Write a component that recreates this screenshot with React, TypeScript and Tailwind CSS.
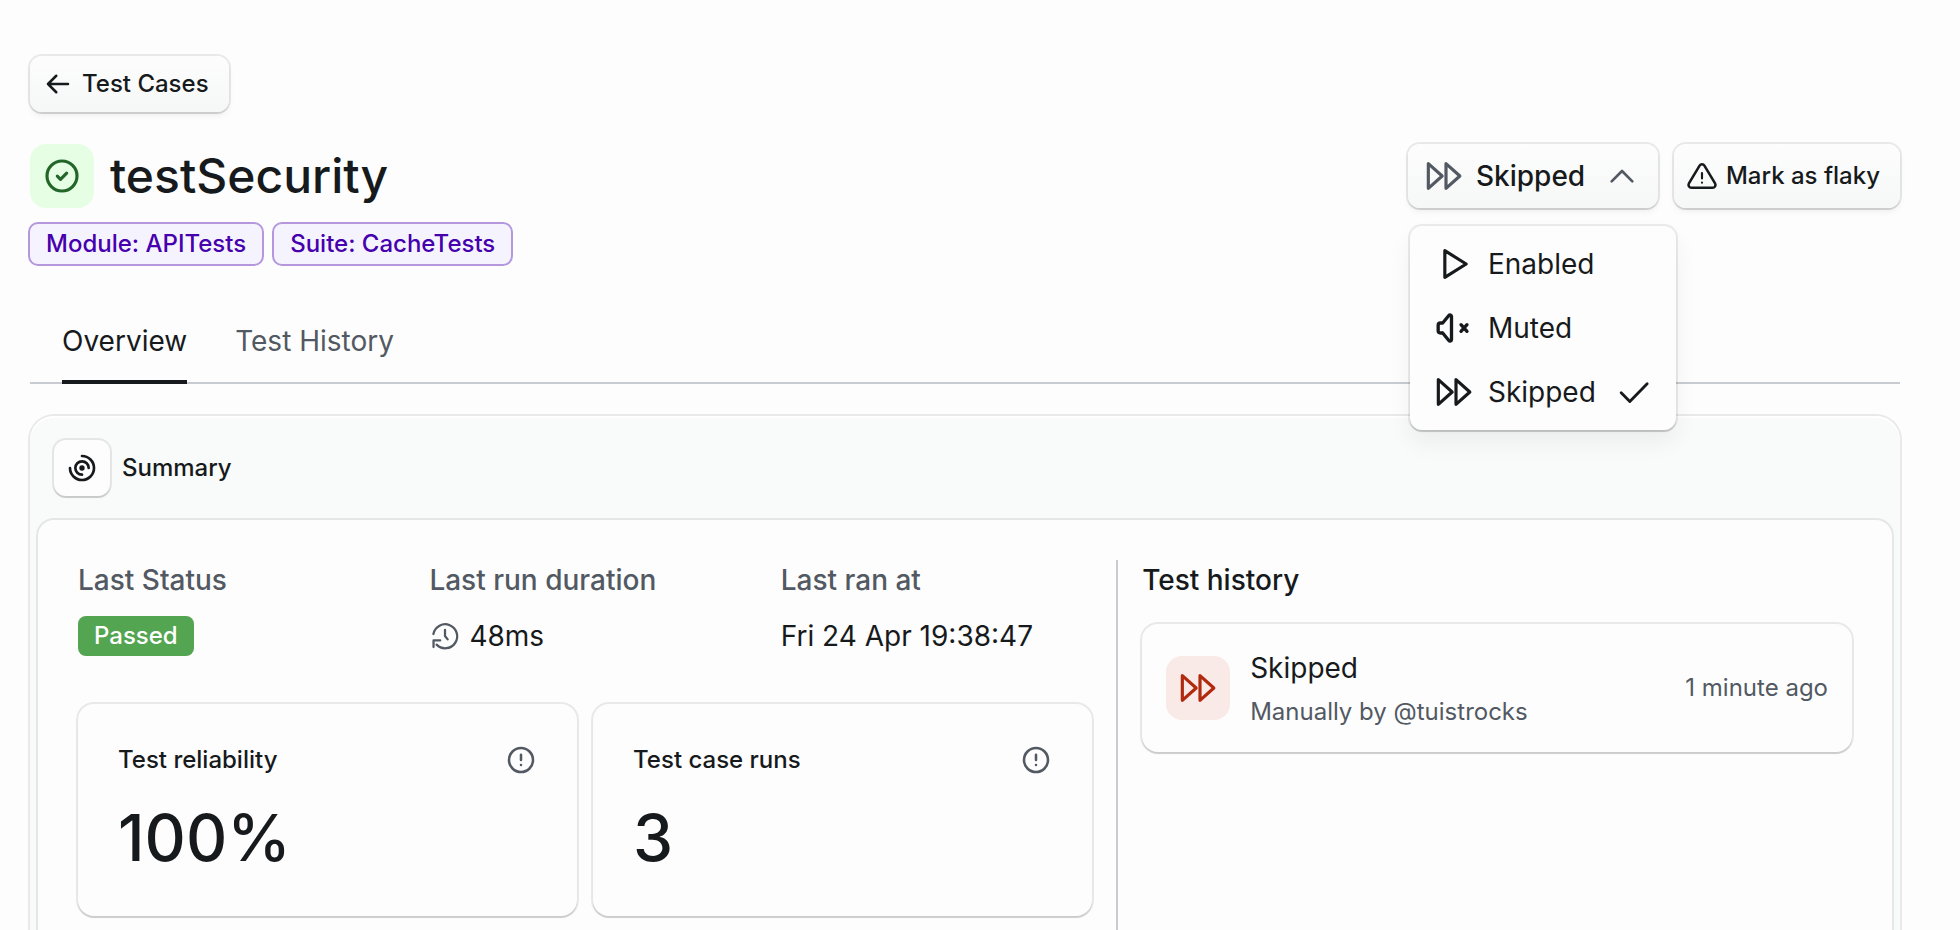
import type { ReactNode } from "react";
import clsx from "clsx";

const RING = "shadow-[0_0_0_2px_rgba(0,0,0,0.08),0_2px_1px_rgba(0,0,0,0.12)]";
const BUTTON =
  "rounded-xl bg-linear-to-b from-[#fdfdfd] to-[#f6f7f7] shadow-[0_0_0_2px_rgba(0,0,0,0.08),0_2px_1px_rgba(0,0,0,0.08),0_4px_6px_rgba(0,0,0,0.05)]";

function Icon({ className, strokeWidth = 1.9, children }: { className?: string; strokeWidth?: number; children: ReactNode }) {
  return (
    <svg
      viewBox="0 0 24 24"
      fill="none"
      stroke="currentColor"
      strokeWidth={strokeWidth}
      strokeLinecap="round"
      strokeLinejoin="round"
      aria-hidden="true"
      className={clsx("shrink-0", className)}
    >
      {children}
    </svg>
  );
}

function SkipIcon({ className }: { className?: string }) {
  return (
    <Icon className={clsx("size-10", className)}>
      <path d="M2.6 4.6v14.8l8.3 -7.4z" />
      <path d="M13.2 4.6v14.8l8.3 -7.4z" />
    </Icon>
  );
}

function ArrowLeftIcon() {
  return (
    <Icon className="size-8">
      <path d="M4.5 12h15M4.5 12l6.2 6.2M4.5 12l6.2 -6.2" />
    </Icon>
  );
}

function InfoIcon() {
  return (
    <Icon className="size-8">
      <circle cx="12" cy="12" r="9" />
      <path d="M12 8v4M12 15.8v.01" />
    </Icon>
  );
}

const MENU_ITEMS = [
  {
    label: "Enabled",
    selected: false,
    icon: (
      <Icon className="size-10">
        <path d="M6.5 4v16l12.8 -8z" />
      </Icon>
    ),
  },
  {
    label: "Muted",
    selected: false,
    icon: (
      <Icon className="size-10" strokeWidth={2}>
        <path d="M5.2 15h-1.4a1.3 1.3 0 0 1 -1.3 -1.3v-3.4a1.3 1.3 0 0 1 1.3 -1.3h1.4l3.7 -4.5a.9 .9 0 0 1 1.6 .6v13.8a.9 .9 0 0 1 -1.6 .6l-3.7 -4.5" />
        <path d="M16.2 10l3.6 4M19.8 10l-3.6 4" />
      </Icon>
    ),
  },
  { label: "Skipped", selected: true, icon: <SkipIcon /> },
];

function StateMenu() {
  return (
    <div className="relative">
      <button aria-haspopup="menu" aria-expanded="true" className={clsx("flex h-16 w-[250px] items-center px-4", BUTTON)}>
        <SkipIcon className="text-[#525962]" />
        <span className="ml-3 text-[28px] font-medium">Skipped</span>
        <Icon className="ml-auto size-10 text-[#525962]" strokeWidth={1.6}>
          <path d="M5.8 15.2l6.2 -6.2l6.2 6.2" />
        </Icon>
      </button>
      <div
        role="menu"
        className="absolute top-full left-0.5 z-10 mt-[18px] w-[266px] rounded-xl bg-[#fdfdfd] py-1.5 shadow-[0_0_0_2px_rgba(0,0,0,0.07),0_2px_1px_rgba(0,0,0,0.14),0_12px_24px_rgba(0,0,0,0.06)]"
      >
        {MENU_ITEMS.map((item) => (
          <button
            key={item.label}
            role="menuitemradio"
            aria-checked={item.selected}
            className="flex h-16 w-full items-center gap-3.5 px-6 text-[28px]"
          >
            {item.icon}
            <span>{item.label}</span>
            {item.selected && (
              <Icon className="ml-auto size-10" strokeWidth={1.7}>
                <path d="M5.5 12.5l5.2 5.2l10.4 -10.7" />
              </Icon>
            )}
          </button>
        ))}
      </div>
    </div>
  );
}

function Tag({ children }: { children: ReactNode }) {
  return (
    <span className="flex h-11 items-center rounded-[10px] border-2 border-[#b497dc] bg-[#f5f4fe] px-4 text-2xl font-medium text-[#4600ad]">
      {children}
    </span>
  );
}

function Field({ label, children }: { label: string; children: ReactNode }) {
  return (
    <div className="flex flex-1 flex-col gap-4">
      <dt className="text-[28px] leading-10 font-medium text-[#525962]">{label}</dt>
      <dd className="flex h-10 items-center gap-2 text-[28px]">{children}</dd>
    </div>
  );
}

function StatCard({ label, value }: { label: string; value: string }) {
  return (
    <div className={clsx("flex-1 rounded-2xl bg-[#fdfdfd] p-10", RING)}>
      <div className="flex items-center justify-between">
        <h3 className="text-2xl font-medium">{label}</h3>
        <button aria-label={`About ${label.toLowerCase()}`} className="text-[#525962]">
          <InfoIcon />
        </button>
      </div>
      <p className="mt-6 text-[64px] leading-[76px] font-medium">{value}</p>
    </div>
  );
}

export default function App() {
  return (
    <div className="h-screen overflow-hidden bg-[#fdfdfd] px-[30px] pt-14 font-['Inter',sans-serif] text-[#171a1c]">
      <div className="mr-[30px] flex flex-col">
        <a href="#test-cases" className={clsx("flex h-14 items-center gap-2 self-start px-3 pr-5 text-2xl font-medium", BUTTON)}>
          <ArrowLeftIcon />
          Test Cases
        </a>

        {/* Title row */}
        <header className="mt-8 flex items-center justify-between">
          <div className="flex items-center gap-4">
            <span className="flex size-16 items-center justify-center rounded-2xl bg-[#e6ffe4] text-[#24662a]">
              <Icon className="size-10">
                <circle cx="12" cy="12" r="9" />
                <path d="M9.2 12.1l1.9 1.9l3.7 -3.7" />
              </Icon>
            </span>
            <h1 className="text-5xl font-medium">testSecurity</h1>
          </div>
          <div className="flex gap-4">
            <StateMenu />
            <button className={clsx("flex h-16 items-center gap-2 pr-5 pl-3 text-2xl font-medium", BUTTON)}>
              <Icon className="size-8">
                <path d="M10.2 4.2l-8 13.3a2.2 2.2 0 0 0 1.9 3.3h15.8a2.2 2.2 0 0 0 1.9 -3.3l-8 -13.3a2.1 2.1 0 0 0 -3.6 0z" />
                <path d="M12 9.8v4M12 17v.01" strokeWidth={1.6} />
              </Icon>
              Mark as flaky
            </button>
          </div>
        </header>

        <div className="-mx-0.5 mt-3.5 flex gap-2">
          <Tag>Module: APITests</Tag>
          <Tag>Suite: CacheTests</Tag>
        </div>

        {/* Tabs */}
        <nav className="mt-10 flex gap-12 border-b-2 border-[#c8ccd1] px-8 text-[28px]">
          <a href="#overview" aria-current="page" className="-mb-0.5 flex h-[78px] items-center border-b-4 border-[#171a1c] pb-1">
            Overview
          </a>
          <a href="#test-history" className="flex h-[76px] items-center pb-1.5 text-[#525962]">
            Test History
          </a>
        </nav>

        {/* Summary */}
        <section className="mt-8 rounded-3xl bg-[#f9fbfa] px-2 pt-6 shadow-[0_0_0_2px_rgba(0,0,0,0.08),inset_0_2px_0_#fff]">
          <div className="flex items-center gap-3 px-4">
            <span className={clsx("flex size-14 items-center justify-center rounded-xl bg-[#fdfdfd]", RING)}>
              <Icon className="size-8" strokeWidth={2}>
                <path d="M12 3a9 9 0 1 1 -9 9M12 17a5 5 0 1 1 5 -5" />
                <circle cx="12" cy="12" r="1" fill="currentColor" />
              </Icon>
            </span>
            <h2 className="text-2xl font-medium">Summary</h2>
          </div>

          <div className="mt-6 flex min-h-[480px] gap-6 rounded-2xl bg-[#fdfdfd] p-10 shadow-[0_0_0_2px_rgba(0,0,0,0.08)]">
            <div className="flex-[10]">
              <dl className="flex gap-10">
                <Field label="Last Status">
                  <span className="flex h-10 items-center rounded-lg bg-[#53a551] px-4 text-2xl font-medium text-white">Passed</span>
                </Field>
                <Field label="Last run duration">
                  <Icon className="size-8 text-[#525962]" strokeWidth={1.7}>
                    <path d="M3.3 10.5a9 9 0 1 1 2.4 8M3.4 20.3v-5h5M12 7.5v4.5l2 2.5" />
                  </Icon>
                  48ms
                </Field>
                <Field label="Last ran at">Fri 24 Apr 19:38:47</Field>
              </dl>
              <div className="mt-12 flex gap-4">
                <StatCard label="Test reliability" value="100%" />
                <StatCard label="Test case runs" value="3" />
              </div>
            </div>
            <div className="w-0.5 bg-[#c8ccd1]" />
            <div className="flex-[7]">
              <h2 className="text-[28px] leading-10 font-medium">Test history</h2>
              <div className={clsx("mt-6 flex h-32 items-center gap-5 rounded-2xl px-6", RING)}>
                <span className="flex size-16 items-center justify-center rounded-2xl bg-[#f9eae7] text-[#b12a10]">
                  <SkipIcon />
                </span>
                <div className="pt-1">
                  <p className="text-[28px] leading-10">Skipped</p>
                  <p className="mt-1 text-2xl leading-10 text-[#525962]">Manually by @tuistrocks</p>
                </div>
                <time className="ml-auto text-2xl text-[#525962]">1 minute ago</time>
              </div>
            </div>
          </div>
        </section>
      </div>
    </div>
  );
}
